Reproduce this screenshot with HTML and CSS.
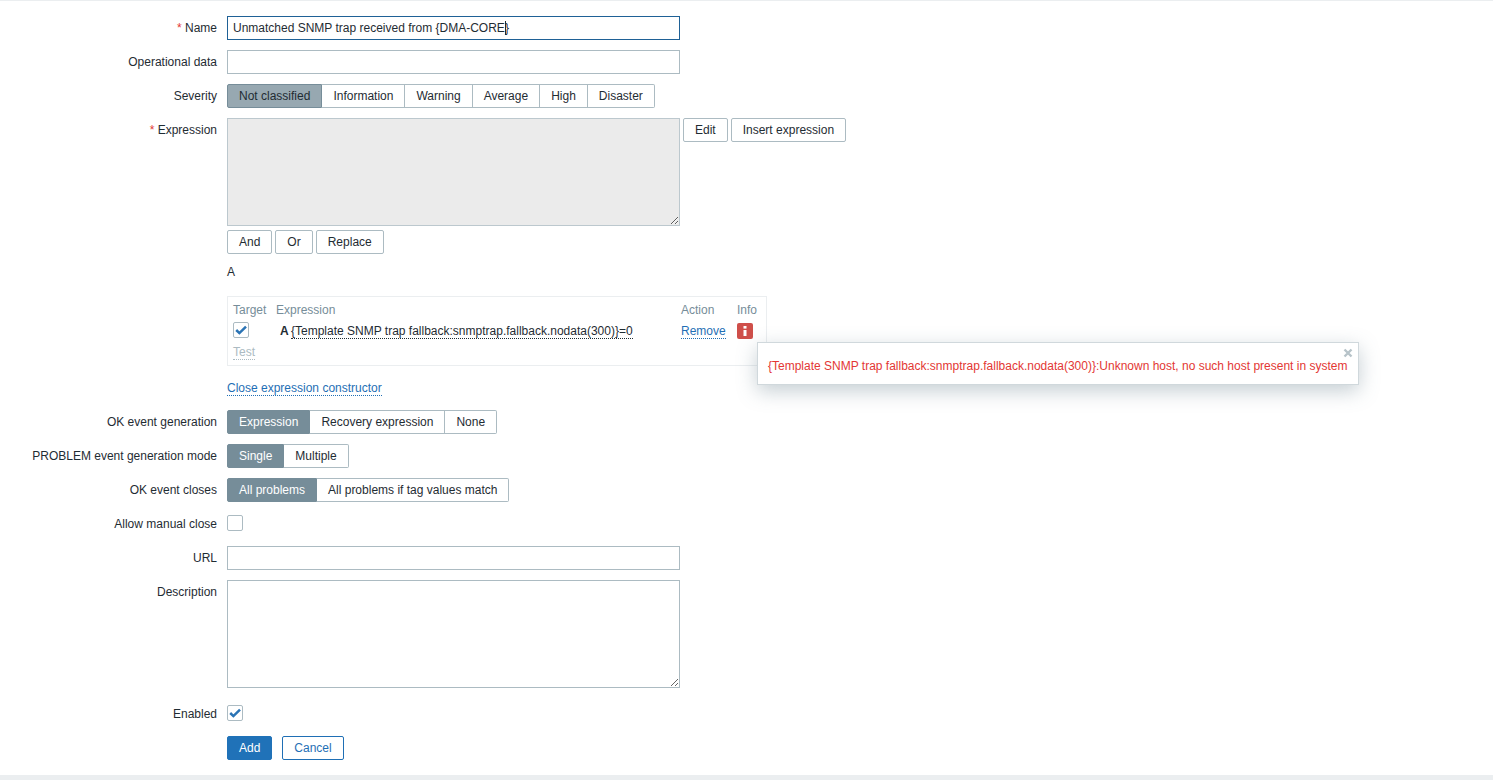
FILE: index.html
```html
<!DOCTYPE html>
<html lang="en">
<head>
<meta charset="utf-8">
<title>Trigger</title>
<link rel="stylesheet" href="styles.css">
</head>
<body>
<main class="page">
  <form class="form">
    <div class="label"><span class="req">*</span> Name</div>
    <div class="field"><div class="input focused">Unmatched SNMP trap received from {DMA-CORE<span class="caret"></span>}</div></div>

    <div class="label">Operational data</div>
    <div class="field"><div class="input"></div></div>

    <div class="label">Severity</div>
    <div class="field">
      <div class="seg severity">
        <span class="seg-item on-light">Not classified</span><span class="seg-item">Information</span><span class="seg-item">Warning</span><span class="seg-item">Average</span><span class="seg-item">High</span><span class="seg-item">Disaster</span>
      </div>
    </div>

    <div class="label"><span class="req">*</span> Expression</div>
    <div class="field">
      <div class="expr-top">
        <textarea class="area disabled" disabled></textarea>
        <div class="btn-row"><button type="button" class="btn">Edit</button><button type="button" class="btn">Insert expression</button></div>
      </div>
      <div class="btn-row ops"><button type="button" class="btn">And</button><button type="button" class="btn">Or</button><button type="button" class="btn">Replace</button></div>
      <div class="letter">A</div>
      <div class="constructor">
        <div class="c-head">Target</div><div class="c-head">Expression</div><div class="c-head">Action</div><div class="c-head">Info</div>
        <div class="c-cell c-check"><span class="check checked"><svg viewBox="0 0 14 14" width="14" height="14"><path d="M2.2 7l3.2 3.1L12 3.6" fill="none" stroke="#2b74b5" stroke-width="2.5"/></svg></span></div>
        <div class="c-cell"><b class="c-letter">A</b> <a class="dotted dark">{Template SNMP trap fallback:snmptrap.fallback.nodata(300)}=0</a></div>
        <div class="c-cell"><a class="dotted link">Remove</a></div>
        <div class="c-cell"><span class="info-icon"><svg viewBox="0 0 16 16" width="16" height="16"><rect x="6.5" y="3" width="3" height="2.6" fill="#fff"/><rect x="6.5" y="7" width="3" height="6" fill="#fff"/></svg></span></div>
        <div class="c-test"><a class="dotted muted">Test</a></div>
      </div>
      <div class="close-row"><a class="dotted link">Close expression constructor</a></div>
    </div>

    <div class="label">OK event generation</div>
    <div class="field"><div class="seg"><span class="seg-item on">Expression</span><span class="seg-item">Recovery expression</span><span class="seg-item">None</span></div></div>

    <div class="label">PROBLEM event generation mode</div>
    <div class="field"><div class="seg"><span class="seg-item on">Single</span><span class="seg-item">Multiple</span></div></div>

    <div class="label">OK event closes</div>
    <div class="field"><div class="seg"><span class="seg-item on">All problems</span><span class="seg-item">All problems if tag values match</span></div></div>

    <div class="label">Allow manual close</div>
    <div class="field check-field"><span class="check"></span></div>

    <div class="label">URL</div>
    <div class="field"><div class="input"></div></div>

    <div class="label">Description</div>
    <div class="field"><textarea class="area"></textarea></div>

    <div class="label enabled-label">Enabled</div>
    <div class="field check-field enabled-field"><span class="check checked"><svg viewBox="0 0 14 14" width="14" height="14"><path d="M2.2 7l3.2 3.1L12 3.6" fill="none" stroke="#2b74b5" stroke-width="2.5"/></svg></span></div>

    <div></div>
    <div class="field actions"><button type="button" class="btn primary">Add</button><button type="button" class="btn outline">Cancel</button></div>
  </form>

  <div class="popup">
    <svg class="popup-close" viewBox="0 0 10 10" width="10" height="10"><path d="M1.5 1.5l7 7M8.5 1.5l-7 7" fill="none" stroke="#b7c3c9" stroke-width="2.4"/></svg>
    {Template SNMP trap fallback:snmptrap.fallback.nodata(300)}:Unknown host, no such host present in system
  </div>
</main>
<div class="footer-bar"></div>
</body>
</html>
```
FILE: styles.css
```css
* { box-sizing: border-box; }
html, body { margin: 0; height: 100%; }
body {
  font: 12px/14px "Liberation Sans", Arial, sans-serif;
  color: #1f2c33;
  background: #fff;
  overflow: hidden;
  display: flex;
  flex-direction: column;
}
.page {
  position: relative;
  flex: 1;
  border-top: 1px solid #ebeef0;
  padding-top: 15px;
}
.footer-bar { height: 5px; background: #ebeef0; }

.form {
  display: grid;
  grid-template-columns: 217px 1fr;
  column-gap: 10px;
  row-gap: 10px;
  align-items: start;
}
.label { text-align: right; line-height: 24px; white-space: nowrap; }
.req { color: #e33734; }
.field { min-width: 0; }

.input {
  width: 453px;
  height: 24px;
  border: 1px solid #acbbc2;
  padding: 0 5px;
  line-height: 22px;
  background: #fff;
  white-space: nowrap;
}
.input.focused { border-color: #1f6196; }
.caret {
  display: inline-block;
  width: 1px;
  height: 14px;
  margin-right: -1px;
  background: #1f2c33;
  vertical-align: -3px;
}
.area {
  display: block;
  width: 453px;
  height: 108px;
  margin: 0;
  border: 1px solid #acbbc2;
  border-radius: 0;
  background: #fff;
  outline: 0;
  resize: both;
}
.area.disabled { background: #ebebeb; border-color: #bcc8ce; }

.seg { display: inline-flex; height: 24px; border-radius: 2px; }
.seg-item {
  padding: 0 11px;
  line-height: 22px;
  border: 1px solid #acbbc2;
  border-left-width: 0;
  background: #fff;
  white-space: nowrap;
}
.seg-item:first-child { border-left-width: 1px; border-radius: 2px 0 0 2px; }
.seg-item:last-child { border-radius: 0 2px 2px 0; }
.seg-item.on { background: #768d99; border-color: #768d99; color: #fff; }
.seg-item.on-light { background: #97a8b1; border-color: #768d99; color: #1f2c33; }

.btn {
  height: 24px;
  padding: 0 11px;
  font: inherit;
  color: #1f2c33;
  background: #fff;
  border: 1px solid #acbbc2;
  border-radius: 2px;
  white-space: nowrap;
}
.btn-row { display: flex; gap: 3px; }
.expr-top { display: flex; gap: 3px; align-items: flex-start; }
.ops { margin-top: 4px; }
.letter { margin-top: 11px; line-height: 14px; }

.constructor {
  width: 540px;
  height: 70px;
  margin-top: 17px;
  padding: 5px 0 0 5px;
  border: 1px solid #ebeef0;
  display: grid;
  grid-template-columns: 43px 405px 56px 30px;
  grid-template-rows: 16px 26px 16px;
  align-items: center;
}
.c-head { color: #768d99; line-height: 16px; }
.c-check { margin-top: -2px; }
.c-letter { margin-left: 4px; margin-right: -1px; }
.c-test { grid-column: 1 / -1; line-height: 14px; }
.dotted { border-bottom: 1px dotted; }
.dark { color: #1f2c33; border-color: #1f2c33; }
.link { color: #1f6fb5; border-color: #1f6fb5; }
.muted { color: #acbbc2; border-color: #acbbc2; }
.close-row { margin-top: 15px; margin-bottom: 5px; line-height: 14px; }

.check {
  display: block;
  width: 16px;
  height: 16px;
  border: 1px solid #acbbc2;
  border-radius: 2px;
  background: #fff;
}
.check svg { display: block; }
.check-field { height: 24px; padding-top: 3px; }
.info-icon {
  display: block;
  width: 16px;
  height: 16px;
  border-radius: 2px;
  background: #cf4f4a;
}
.info-icon svg { display: block; }

.enabled-label { margin-top: 4px; }
.enabled-field { margin-top: 4px; }
.actions { display: flex; gap: 10px; }
.btn.primary { background: #2072b8; border-color: #2072b8; color: #fff; }
.btn.outline { color: #1f6fb5; border-color: #1f6fb5; }

.popup {
  position: absolute;
  left: 757px;
  top: 341px;
  width: 602px;
  height: 43px;
  padding: 16px 10px 0;
  background: #fff;
  border: 1px solid #d0d8dc;
  box-shadow: 0 6px 20px rgba(90, 115, 130, .35);
  color: #e33734;
  white-space: nowrap;
}
.popup-close {
  position: absolute;
  right: 5px;
  top: 5px;
}
```
